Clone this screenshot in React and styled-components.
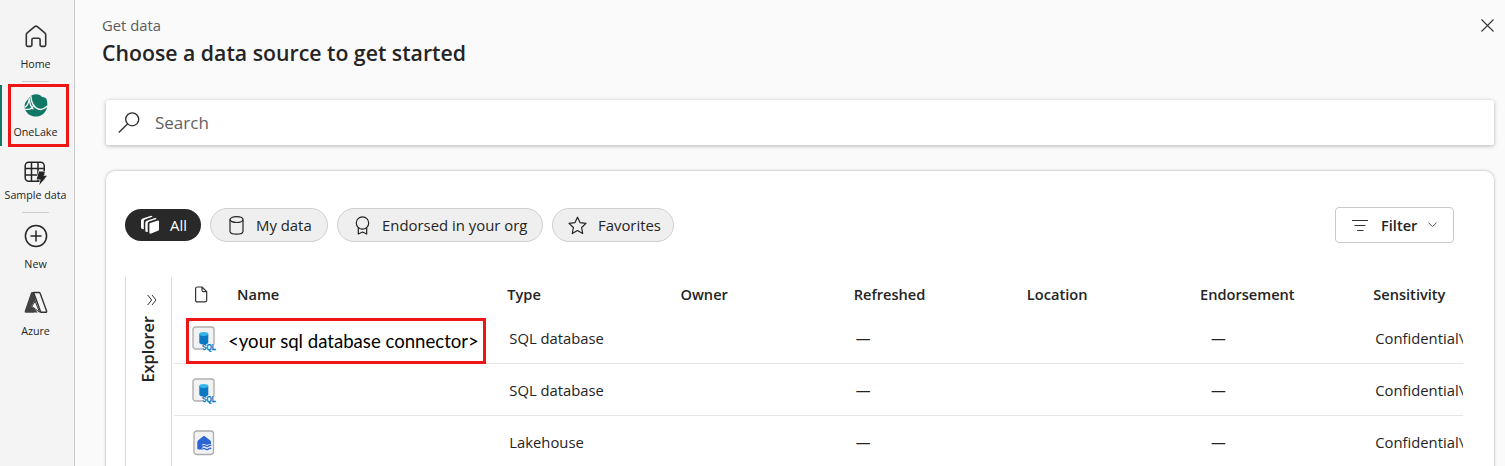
import React from 'react';
import styled, { createGlobalStyle } from 'styled-components';

const Global = createGlobalStyle`
  * { box-sizing: border-box; }
  body {
    margin: 0;
    overflow: hidden;
    background: #fafafa;
    color: #242424;
    font-family: 'Open Sans', 'Noto Sans', sans-serif;
  }
  svg { display: block; flex: none; }
`;

const Page = styled.div`
  display: flex;
  height: 466px;
  overflow: hidden;
`;

const Sidebar = styled.nav`
  flex: none;
  width: 75px;
  padding-top: 15px;
  display: flex;
  flex-direction: column;
  background: #f4f4f4;
  border-right: 1px solid #c9c9c9;
`;

const NavItem = styled.a`
  position: relative;
  height: ${(p) => p.$height}px;
  padding-top: ${(p) => p.$top}px;
  padding-right: 3px;
  display: flex;
  flex-direction: column;
  align-items: center;
  gap: ${(p) => p.$gap}px;
  color: #242424;
`;

const NavLabel = styled.span`
  font-size: 10.7px;
  line-height: 16px;
  white-space: nowrap;
`;

const NavDivider = styled.hr`
  width: 27px;
  height: 1px;
  margin: 0 0 0 22px;
  border: 0;
  background: #cdcdcd;
`;

const ActiveBar = styled.span`
  position: absolute;
  left: 0;
  top: 3px;
  width: 2px;
  height: 61px;
  background: #117865;
`;

const Highlight = styled.span`
  position: absolute;
  left: ${(p) => p.$x}px;
  top: ${(p) => p.$y}px;
  width: ${(p) => p.$w}px;
  height: ${(p) => p.$h}px;
  border: 3px solid #ee1515;
`;

const Main = styled.main`
  flex: 1;
  min-width: 0;
  padding: 13px 10px 0 27px;
  display: flex;
  flex-direction: column;
`;

const Header = styled.header`
  flex: none;
  height: 87px;
  display: flex;
  justify-content: space-between;
`;

const Crumb = styled.div`
  font-size: 14.8px;
  line-height: 24px;
  color: #5c5c5c;
`;

const Title = styled.h1`
  margin: 1px 0 0;
  font-size: 21.25px;
  line-height: 30px;
  font-weight: 600;
`;

const CloseButton = styled.button`
  height: 13px;
  margin: 6px 1px 0 0;
  padding: 0;
  border: 0;
  background: none;
  color: #333;
`;

const SearchBox = styled.div`
  flex: none;
  height: 45px;
  margin: 0 1px 0 4px;
  padding-left: 12px;
  display: flex;
  align-items: center;
  gap: 15px;
  background: #fff;
  border-radius: 2px;
  box-shadow: 0 1px 4px rgba(0, 0, 0, 0.28);
  color: #2b2b2b;
`;

const Placeholder = styled.span`
  font-size: 17px;
  color: #616161;
`;

const Card = styled.section`
  flex: 1;
  margin: 26px 1px 0 4px;
  padding: 36px 31px 0 19px;
  display: flex;
  flex-direction: column;
  background: #fff;
  border-radius: 9px 9px 0 0;
  box-shadow: 0 0 0 1px rgba(0, 0, 0, 0.05), 0 0 3px 1px rgba(0, 0, 0, 0.12);
`;

const Toolbar = styled.div`
  flex: none;
  height: 70px;
  padding-right: 9px;
  display: flex;
  align-items: flex-start;
  gap: 9px;
`;

const Pill = styled.button`
  width: ${(p) => p.$width}px;
  height: ${(p) => (p.$active ? 32 : 34)}px;
  margin-top: ${(p) => (p.$active ? 2 : 1)}px;
  padding: 0 0 0 ${(p) => p.$pad}px;
  display: flex;
  align-items: center;
  gap: ${(p) => p.$gap}px;
  font: 14.9px 'Open Sans', sans-serif;
  white-space: nowrap;
  color: ${(p) => (p.$active ? '#fff' : '#242424')};
  background: ${(p) => (p.$active ? '#292929' : '#efefef')};
  border: ${(p) => (p.$active ? '0' : '1px solid #cfcfcf')};
  border-radius: 17px;
`;

const FilterButton = styled.button`
  width: 119px;
  height: 36px;
  margin-left: auto;
  padding: 0 0 0 16px;
  display: flex;
  align-items: center;
  font: 600 14.6px 'Open Sans', sans-serif;
  color: #242424;
  background: #fff;
  border: 1px solid #c9c9c9;
  border-radius: 4px;
`;

const FilterLabel = styled.span`
  margin: 0 11px 0 13px;
`;

const Content = styled.div`
  flex: 1;
  min-height: 0;
  display: flex;
  gap: 2px;
`;

const Explorer = styled.aside`
  flex: none;
  width: 47px;
  padding: 17px 0 0 7px;
  display: flex;
  flex-direction: column;
  align-items: center;
  gap: 10px;
  border: solid #dcdcdc;
  border-width: 0 1px;
`;

const ExplorerLabel = styled.span`
  writing-mode: vertical-rl;
  transform: rotate(180deg);
  font-size: 16.4px;
  line-height: 22px;
  font-weight: 600;
  margin-right: 8px;
`;

const Table = styled.div`
  flex: 1;
  min-width: 0;
  overflow: hidden;
`;

const columns = '55px 278.3px repeat(6, 173.2px)';

const HeadRow = styled.div`
  height: 35px;
  display: grid;
  grid-template-columns: ${columns};
  align-items: center;
  font-size: 14.6px;
  font-weight: 600;
  svg { margin-left: 21px; }
`;

const HeadCell = styled.span`
  padding: 0 0 2px ${(p) => p.$pad || 0}px;
`;

const Row = styled.div`
  position: relative;
  height: 52px;
  display: grid;
  grid-template-columns: ${columns};
  align-items: center;
  border-bottom: 1px solid #e6e6e6;
  font-size: 14.8px;
`;

const IconCell = styled.span`
  padding: 2px 0 0 18px;
`;

const NameCell = styled.span`
  margin-left: -1px;
  padding-top: 7px;
  font: 18.6px Lato, 'Open Sans', sans-serif;
  color: #000;
`;

const Cell = styled.span`
  padding-left: ${(p) => p.$pad || 2}px;
  padding-top: 1px;
  white-space: nowrap;
`;

const HomeIcon = () => (
  <svg width="22" height="23" viewBox="0 0 22 23" fill="none" stroke="#333" strokeWidth="1.6" strokeLinejoin="round">
    <path d="M9.700 1.600 2.200 7.800q-.9.800-.9 2v10.300q0 1.300 1.300 1.300h3q1.300 0 1.300-1.300v-5.400q0-1.500 1.500-1.500h5.200q1.500 0 1.500 1.500v5.400q0 1.300 1.300 1.300h3q1.300 0 1.300-1.300V9.800q0-1.200-.9-2l-7.500-6.200q-1.300-1-2.600 0Z" />
  </svg>
);

const OneLakeIcon = () => (
  <svg width="24" height="23" viewBox="0 0 24 23" fill="none">
    <path d="M8 1.200C10.600-.2 14 0 16.200 1.300c1 .9 1.800 1.700 3.300 2 1.700.2 2.900 1 3.300 2.700.4 1.600.6 3.200.5 5.400-.3 6.400-5.300 11.100-11.500 11.100-5.200 0-9.500-3.200-11.100-8.100C.1 11.500.8 8.300 4 5.300 5.200 3.500 6.500 2 8 1.200Z" fill="#117865" />
    <path d="M6.700 2.200c.6 5.800 3.100 11.300 7.500 12.800 3.200 1.100 6.600-.3 9.500-3.200" stroke="#f4f4f4" strokeWidth="1.500" />
    <path d="M.4 13.300c2.800-1.200 4.400-4 4.900-8.900.2 4.400 1.300 8 4 10.900" stroke="#f4f4f4" strokeWidth="1.300" />
    <path d="M1 15.100c4.700 1 7.700-.5 9-4.300" stroke="#f4f4f4" strokeWidth="1.300" />
  </svg>
);

const SampleIcon = () => (
  <svg width="23" height="24" viewBox="0 0 23 24" fill="none" stroke="#242424" strokeWidth="1.500">
    <rect x="1.200" y="1.200" width="19" height="19" rx="3.500" />
    <path d="M7.500 1v19.500M14 1v19.500M1 7.500h19.500M1 14h19.500" />
    <path d="M15 10.500h6l-1.400 4.200h3.400l-7.700 9.200 1.300-5.400h-4Z" fill="#242424" stroke="#f4f4f4" strokeWidth="1.200" paintOrder="stroke" />
  </svg>
);

const NewIcon = () => (
  <svg width="24" height="24" viewBox="0 0 24 24" fill="none" stroke="#242424" strokeWidth="1.500" strokeLinecap="round">
    <circle cx="12" cy="12" r="10.600" />
    <path d="M12 7v10M7 12h10" />
  </svg>
);

const AzureIcon = () => (
  <svg width="24" height="23" viewBox="0 0 24 23" fill="none" strokeLinejoin="round">
    <path d="M8.200.900h5L9.200 11 6.800 15l5.200 4.500-3 2.300H2q-1.800 0-1.300-1.900L6.900 2q.3-1.100 1.300-1.100Z" fill="#424242" />
    <path d="M9.600 1.500h5.200q1.100 0 1.400.9L22.600 20q.4 1.300-1 1.300h-4.800L9.600 1.500Z" fill="#f4f4f4" stroke="#333" strokeWidth="1.400" />
    <path d="M9.700 1.500 12 10.500l-1.900.3L7.200 15.500l6.800 6H9l-3-4.500Z" fill="#424242" />
    <path d="m11.200 10.300 4.400 10.900-7.800-5.800Z" fill="#f4f4f4" stroke="#333" strokeWidth="1" />
  </svg>
);

const CloseIcon = () => (
  <svg width="13" height="13" viewBox="0 0 13 13" stroke="currentColor" strokeWidth="1.100">
    <path d="m.5.500 12 12M12.500.500l-12 12" />
  </svg>
);

const SearchIcon = () => (
  <svg width="22" height="22" viewBox="0 0 22 22" fill="none" stroke="currentColor" strokeWidth="1.300">
    <circle cx="14.200" cy="7.300" r="6.500" />
    <path d="M9.500 12 .8 20.500" />
  </svg>
);

const StackIcon = () => (
  <svg width="20" height="20" viewBox="0 0 20 20" fill="currentColor">
    <path d="M9.700 8.200 17.200 5.700q1.800-.4 1.800 1.300v7.300q0 1.100-1 1.500l-6.900 2.800q-1.700.6-1.700-1.100V9.700q0-1.100.3-1.500Z" />
    <path d="M5.300 15.800V7.900q0-1.600 1.500-2.200l8.200-2.600q1.200-.2 1.600.8L9.200 6.600Q7.700 7.200 7.700 8.800v8.200Q5.300 17.200 5.300 15.800Z" />
    <path d="M1 12.500V5.700Q1 4 2.600 3.400L10.300.900q1.700-.4 2.200.8L5.400 4.200Q3.800 4.800 3.800 6.500v7.800Q1 14.300 1 12.500Z" />
  </svg>
);

const CylinderIcon = () => (
  <svg width="15" height="19" viewBox="0 0 15 19" fill="none" stroke="currentColor" strokeWidth="1.200">
    <ellipse cx="7.500" cy="3.600" rx="6.500" ry="2.900" />
    <path d="M1 3.600v11.600c0 1.600 2.900 2.900 6.500 2.900s6.500-1.300 6.500-2.900V3.600" />
  </svg>
);

const RibbonIcon = () => (
  <svg width="15" height="19" viewBox="0 0 15 19" fill="none" stroke="currentColor" strokeWidth="1.200" strokeLinejoin="round">
    <circle cx="7.500" cy="7" r="6.200" />
    <path d="M3.300 11.700V18l4.200-2 4.200 2v-6.300" />
  </svg>
);

const StarIcon = () => (
  <svg width="19" height="19" viewBox="0 0 19 19" fill="none" stroke="currentColor" strokeWidth="1.200" strokeLinejoin="round">
    <path d="m9.500 1.200 2.500 5.400 6 .8-4.400 4.100 1.100 6-5.200-2.900-5.200 2.900 1.100-6L1 7.400l6-.8Z" />
  </svg>
);

const FilterIcon = () => (
  <svg width="16" height="11" viewBox="0 0 16 11" stroke="#333" strokeWidth="1.100">
    <path d="M0 .500h16M2.500 5.500h11M5 10.500h6.500" />
  </svg>
);

const ChevronIcon = () => (
  <svg width="9" height="6" viewBox="0 0 9 6" fill="none" stroke="#555" strokeWidth="1">
    <path d="m.5.700 4 4 4-4" />
  </svg>
);

const DoubleChevron = () => (
  <svg width="10" height="12" viewBox="0 0 10 12" fill="none" stroke="#333" strokeWidth="1">
    <path d="m.7 1 4 5-4 5M5 1l4 5-4 5" />
  </svg>
);

const FileIcon = () => (
  <svg width="13" height="17" viewBox="0 0 13 17" fill="none" stroke="#333" strokeWidth="1.200" strokeLinejoin="round">
    <path d="M2.300 1h4.700l4.700 4.700v8.500q0 1.700-1.700 1.700H2.300q-1.700 0-1.700-1.700V2.700Q.6 1 2.300 1ZM7 1v3.200q0 1.500 1.500 1.500h3.200" />
  </svg>
);

const SqlText = styled.text`
  font: 700 8.300px 'Liberation Sans', sans-serif;
  fill: #0078c8;
  stroke: #0078c8;
  stroke-width: 0.250px;
`;

const SqlIcon = () => (
  <svg width="25" height="26" viewBox="0 0 25 26">
    <rect x="1" y="1" width="21" height="22" rx="2.500" fill="#f2f2f2" stroke="#b0b0b0" strokeWidth="1.400" />
    <path d="M7.300 8v8.500c0 1.200 2 2.100 4.500 2.100s4.500-.9 4.500-2.100V8Z" fill="#0a78c2" />
    <ellipse cx="11.800" cy="8" rx="4.500" ry="1.900" fill="#35b4e8" />
    <rect x="10" y="18.600" width="15" height="7" fill="#fff" />
    <SqlText x="10" y="24.300" textLength="14" lengthAdjust="spacingAndGlyphs">SQL</SqlText>
  </svg>
);

const LakehouseIcon = () => (
  <svg width="25" height="26" viewBox="0 0 25 26">
    <rect x="2" y="1" width="19.500" height="23.500" rx="2.800" fill="#f2f2f2" stroke="#adadad" strokeWidth="1.300" />
    <path d="M11.200 6.300q.8-.6 1.600 0l5.500 4.200q.7.700.7 1.500v2.500l-6 .5v4.500H6.500q-1.200 0-1.200-1.200V12q0-.8.7-1.500Z" fill="#2c66d4" />
    <path d="M10.500 16q1.500-1.300 3 0t3 0 2.700-.3M10.500 19q1.500-1.300 3 0t3 0 2.700-.3" fill="none" stroke="#f2f2f2" strokeWidth="2.600" />
    <path d="M10.500 16q1.500-1.300 3 0t3 0 2.700-.3M10.500 19q1.500-1.300 3 0t3 0 2.700-.3" fill="none" stroke="#2c66d4" strokeWidth="1.300" />
  </svg>
);

const rows = [
  { icon: <SqlIcon />, name: '<your sql database connector>', type: 'SQL database', marked: true },
  { icon: <SqlIcon />, name: '', type: 'SQL database' },
  { icon: <LakehouseIcon />, name: '', type: 'Lakehouse' },
];

export default function App() {
  return (
    <Page>
      <Global />
      <Sidebar>
        <NavItem $height={66} $top={10} $gap={8}>
          <HomeIcon />
          <NavLabel>Home</NavLabel>
        </NavItem>
        <NavDivider />
        <NavItem $height={67} $top={12} $gap={7}>
          <ActiveBar />
          <OneLakeIcon />
          <NavLabel>OneLake</NavLabel>
          <Highlight $x={8} $y={2} $w={61} $h={63} />
        </NavItem>
        <NavItem $height={63} $top={12} $gap={2}>
          <SampleIcon />
          <NavLabel>Sample data</NavLabel>
        </NavItem>
        <NavDivider />
        <NavItem $height={66} $top={11} $gap={8}>
          <NewIcon />
          <NavLabel>New</NavLabel>
        </NavItem>
        <NavItem $height={66} $top={12} $gap={9}>
          <AzureIcon />
          <NavLabel>Azure</NavLabel>
        </NavItem>
      </Sidebar>
      <Main>
        <Header>
          <div>
            <Crumb>Get data</Crumb>
            <Title>Choose a data source to get started</Title>
          </div>
          <CloseButton aria-label="Close"><CloseIcon /></CloseButton>
        </Header>
        <SearchBox>
          <SearchIcon />
          <Placeholder>Search</Placeholder>
        </SearchBox>
        <Card>
          <Toolbar>
            <Pill $active $width={76} $pad={15} $gap={10}><StackIcon />All</Pill>
            <Pill $width={118} $pad={18} $gap={12}><CylinderIcon />My data</Pill>
            <Pill $width={206} $pad={17} $gap={12}><RibbonIcon />Endorsed in your org</Pill>
            <Pill $width={122} $pad={15} $gap={11}><StarIcon />Favorites</Pill>
            <FilterButton>
              <FilterIcon />
              <FilterLabel>Filter</FilterLabel>
              <ChevronIcon />
            </FilterButton>
          </Toolbar>
          <Content>
            <Explorer>
              <DoubleChevron />
              <ExplorerLabel>Explorer</ExplorerLabel>
            </Explorer>
            <Table>
              <HeadRow>
                <FileIcon />
                <HeadCell $pad={8}>Name</HeadCell>
                <HeadCell>Type</HeadCell>
                <HeadCell>Owner</HeadCell>
                <HeadCell>Refreshed</HeadCell>
                <HeadCell>Location</HeadCell>
                <HeadCell>Endorsement</HeadCell>
                <HeadCell>Sensitivity</HeadCell>
              </HeadRow>
              {rows.map((row, i) => (
                <Row key={i}>
                  <IconCell>{row.icon}</IconCell>
                  <NameCell>{row.name}</NameCell>
                  <Cell>{row.type}</Cell>
                  <Cell />
                  <Cell>—</Cell>
                  <Cell />
                  <Cell $pad={11}>—</Cell>
                  <Cell>Confidential\</Cell>
                  {row.marked && <Highlight $x={12} $y={6} $w={300} $h={46} />}
                </Row>
              ))}
            </Table>
          </Content>
        </Card>
      </Main>
    </Page>
  );
}
